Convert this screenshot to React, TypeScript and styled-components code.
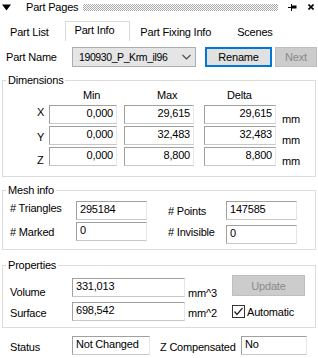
import React from "react";
import styled, { createGlobalStyle } from "styled-components";

const GlobalStyle = createGlobalStyle`
  html, body { margin: 0; padding: 0; background: #ffffff; }
  body {
    font-family: "Liberation Sans", Arial, sans-serif;
    font-size: 11px;
    letter-spacing: -0.2px;
    color: #000000;
  }
  * { box-sizing: border-box; }
`;

const Panel = styled.div`
  width: 318px;
  height: 358px;
  overflow: hidden;
  background: #ffffff;
`;

const TitleBar = styled.div`
  display: flex;
  align-items: center;
  height: 14px;
  padding: 0 4px 0 2px;
  margin-bottom: 7px;
`;

const Title = styled.span`
  margin-left: 15px;
  line-height: 14px;
  white-space: nowrap;
`;

const Grip = styled.div`
  flex: 1;
  height: 7px;
  margin: 0 10px 0 5px;
  background-image: repeating-conic-gradient(#a8a8a8 0 25%, transparent 0 50%);
  background-size: 2px 2px;
`;

const TitleIcon = styled.svg<{ $gap: number }>`
  display: block;
  flex: none;
  margin-left: ${(p) => p.$gap}px;
`;

const TabBar = styled.div`
  display: flex;
  height: 20px;
`;

const Tab = styled.div<{ $active?: boolean }>`
  display: flex;
  align-items: center;
  height: 20px;
  padding: 0 15px ${(p) => (p.$active ? "3px" : "0")} 9px;
  border: 1px solid ${(p) => (p.$active ? "#d9d9d9" : "transparent")};
  border-bottom: none;
  white-space: nowrap;
`;

const PartRow = styled.div`
  display: flex;
  align-items: center;
  height: 20px;
  margin-top: 6px;
  padding-left: 6px;
`;

const RowLabel = styled.span<{ $w: number }>`
  width: ${(p) => p.$w}px;
  flex: none;
  white-space: nowrap;
`;

const Combo = styled.div`
  display: flex;
  align-items: center;
  gap: 4px;
  flex: none;
  width: 124px;
  height: 20px;
  padding: 0 4px 0 6px;
  background: #e5e5e5;
  border: 1px solid #adadad;
  overflow: hidden;
`;

const ComboText = styled.span`
  flex: 1;
  min-width: 0;
  font-size: 10.5px;
  letter-spacing: -0.4px;
  white-space: nowrap;
  overflow: hidden;
`;

const Chevron = styled.svg`
  flex: none;
  display: block;
`;

const Button = styled.div<{ $w: number; $gap?: number; $h?: number; $focus?: boolean; $disabled?: boolean }>`
  display: flex;
  align-items: center;
  justify-content: center;
  flex: none;
  width: ${(p) => p.$w}px;
  height: ${(p) => p.$h ?? 20}px;
  margin-left: ${(p) => p.$gap ?? 0}px;
  background: ${(p) => (p.$disabled ? "#cccccc" : "#e1e1e1")};
  border: ${(p) => (p.$focus ? "2px solid #0078d7" : p.$disabled ? "1px solid #bfbfbf" : "1px solid #adadad")};
  color: ${(p) => (p.$disabled ? "#8a8a8a" : "#000000")};
  white-space: nowrap;
`;

const Group = styled.fieldset<{ $top: number }>`
  margin: ${(p) => p.$top}px 2px 0 2px;
  padding: 0;
  border: 1px solid #dcdcdc;
  min-width: 0;
`;

const Legend = styled.legend`
  margin-left: 3px;
  padding: 0 2px;
  line-height: 14px;
  font-size: 11px;
`;

const DimGrid = styled.div`
  display: grid;
  grid-template-columns: 46px 75px 80px 75px auto;
  grid-template-rows: 15px 19px 19px 19px;
  row-gap: 2px;
  padding: 1px 0 10px 0;
`;

const HeaderCell = styled.div<{ $indent: number }>`
  padding-left: ${(p) => p.$indent}px;
  line-height: 14px;
  align-self: start;
`;

const Label = styled.span<{ $align?: "start" | "center" | "end"; $lh?: number; $indent?: number }>`
  align-self: ${(p) => p.$align ?? "center"};
  line-height: ${(p) => p.$lh ?? 13}px;
  padding-left: ${(p) => p.$indent ?? 0}px;
  white-space: nowrap;
`;

const Field = styled.div<{ $w: number; $right?: boolean; $shift?: number }>`
  flex: none;
  width: ${(p) => p.$w}px;
  height: 19px;
  margin-top: ${(p) => p.$shift ?? 0}px;
  padding: 0 ${(p) => (p.$right ? 3 : 0)}px 0 ${(p) => (p.$right ? 0 : 3)}px;
  line-height: 15px;
  text-align: ${(p) => (p.$right ? "right" : "left")};
  background: #ffffff;
  border-top: 1px solid #a0a0a0;
  border-left: 1px solid #a0a0a0;
  border-right: 1px solid #e6e6e6;
  border-bottom: 1px solid #c8c8c8;
  white-space: nowrap;
  overflow: hidden;
`;

const MeshGrid = styled.div`
  display: grid;
  grid-template-columns: 66px 71px 79px 71px;
  grid-template-rows: 19px 22px;
  row-gap: 2px;
  padding: 4px 0 5px 7px;
`;

const PropGrid = styled.div`
  display: grid;
  grid-template-columns: 62px 113px 47px 80px;
  grid-template-rows: 22px 19px;
  row-gap: 5px;
  padding: 3px 0 6px 7px;
`;

const EndCell = styled.div`
  align-self: end;
`;

const CheckRow = styled.div`
  display: flex;
  align-items: center;
  gap: 2px;
  align-self: center;
`;

const CheckBox = styled.div`
  width: 13px;
  height: 13px;
  border: 1px solid #333333;
  background: #ffffff;
  display: flex;
  align-items: center;
  justify-content: center;
`;

const StatusRow = styled.div`
  display: flex;
  align-items: flex-start;
  height: 19px;
  margin-top: 8px;
  padding-left: 10px;
`;

const StatusLabel = styled.span<{ $w: number; $indent?: number }>`
  width: ${(p) => p.$w}px;
  padding-left: ${(p) => p.$indent ?? 0}px;
  line-height: 22px;
  white-space: nowrap;
  flex: none;
`;

const dims = [
  { axis: "X", min: "0,000", max: "29,615", delta: "29,615", lh: 14, align: "start" as const },
  { axis: "Y", min: "0,000", max: "32,483", delta: "32,483", lh: 22, align: "start" as const },
  { axis: "Z", min: "0,000", max: "8,800", delta: "8,800", lh: 12, align: "end" as const },
];

export default function App() {
  return (
    <>
      <GlobalStyle />
      <Panel>
        <TitleBar>
          <svg width="9" height="7" viewBox="0 0 9 7">
            <polygon points="0,0.5 9,0.5 4.5,6.5" fill="#000" />
          </svg>
          <Title>Part Pages</Title>
          <Grip />
          <TitleIcon $gap={0} width="9" height="7" viewBox="0 0 9 7">
            <line x1="0" y1="3.5" x2="3" y2="3.5" stroke="#000" strokeWidth="1" />
            <line x1="3.5" y1="0" x2="3.5" y2="7" stroke="#000" strokeWidth="1" />
            <rect x="3.5" y="1.5" width="5" height="3" fill="#000" />
          </TitleIcon>
          <TitleIcon $gap={11} width="6" height="6" viewBox="0 0 6 6">
            <path d="M0.5 0.5 L5.5 5.5 M5.5 0.5 L0.5 5.5" stroke="#000" strokeWidth="1.6" />
          </TitleIcon>
        </TitleBar>

        <TabBar>
          <Tab>Part List</Tab>
          <Tab $active>Part Info</Tab>
          <Tab>Part Fixing Info</Tab>
          <Tab>Scenes</Tab>
        </TabBar>

        <PartRow>
          <RowLabel $w={66}>Part Name</RowLabel>
          <Combo>
            <ComboText>190930_P_Krm_il96</ComboText>
            <Chevron width="9" height="6" viewBox="0 0 9 6">
              <polyline points="0.5,1 4.5,5 8.5,1" fill="none" stroke="#4a4a4a" strokeWidth="1.1" />
            </Chevron>
          </Combo>
          <Button $w={67} $gap={9} $focus>Rename</Button>
          <Button $w={42} $gap={3} $disabled>Next</Button>
        </PartRow>

        <Group $top={6}>
          <Legend>Dimensions</Legend>
          <DimGrid>
            <span />
            <HeaderCell $indent={34}>Min</HeaderCell>
            <HeaderCell $indent={33}>Max</HeaderCell>
            <HeaderCell $indent={23}>Delta</HeaderCell>
            <span />
            {dims.map((d) => (
              <React.Fragment key={d.axis}>
                <Label $align={d.align} $lh={d.lh} $indent={34}>{d.axis}</Label>
                <Field $w={68} $right>{d.min}</Field>
                <Field $w={70} $right>{d.max}</Field>
                <Field $w={72} $right>{d.delta}</Field>
                <Label $align="end" $lh={10} $indent={3}>mm</Label>
              </React.Fragment>
            ))}
          </DimGrid>
        </Group>

        <Group $top={6}>
          <Legend>Mesh info</Legend>
          <MeshGrid>
            <Label $align="start" $lh={14}># Triangles</Label>
            <Field $w={71}>295184</Field>
            <Label $align="start" $lh={20} $indent={21}># Points</Label>
            <Field $w={71}>147585</Field>
            <Label $align="start" $lh={20}># Marked</Label>
            <Field $w={71}>0</Field>
            <Label $align="start" $lh={20} $indent={21}># Invisible</Label>
            <Field $w={71} $shift={3}>0</Field>
          </MeshGrid>
        </Group>

        <Group $top={8}>
          <Legend>Properties</Legend>
          <PropGrid>
            <Label $align="end" $lh={10}>Volume</Label>
            <EndCell>
              <Field $w={113}>331,013</Field>
            </EndCell>
            <Label $align="end" $lh={8} $indent={3}>mm^3</Label>
            <Button $w={73} $h={21} $disabled>Update</Button>
            <Label $align="end" $lh={16}>Surface</Label>
            <Field $w={113}>698,542</Field>
            <Label $align="end" $lh={16} $indent={3}>mm^2</Label>
            <CheckRow>
              <CheckBox>
                <svg width="11" height="11" viewBox="0 0 11 11">
                  <polyline points="1.5,5.5 4,8.5 9.5,2" fill="none" stroke="#222" strokeWidth="1.2" />
                </svg>
              </CheckBox>
              <span>Automatic</span>
            </CheckRow>
          </PropGrid>
        </Group>

        <StatusRow>
          <StatusLabel $w={62}>Status</StatusLabel>
          <Field $w={78}>Not Changed</Field>
          <StatusLabel $w={91} $indent={10}>Z Compensated</StatusLabel>
          <Field $w={66}>No</Field>
        </StatusRow>
      </Panel>
    </>
  );
}
